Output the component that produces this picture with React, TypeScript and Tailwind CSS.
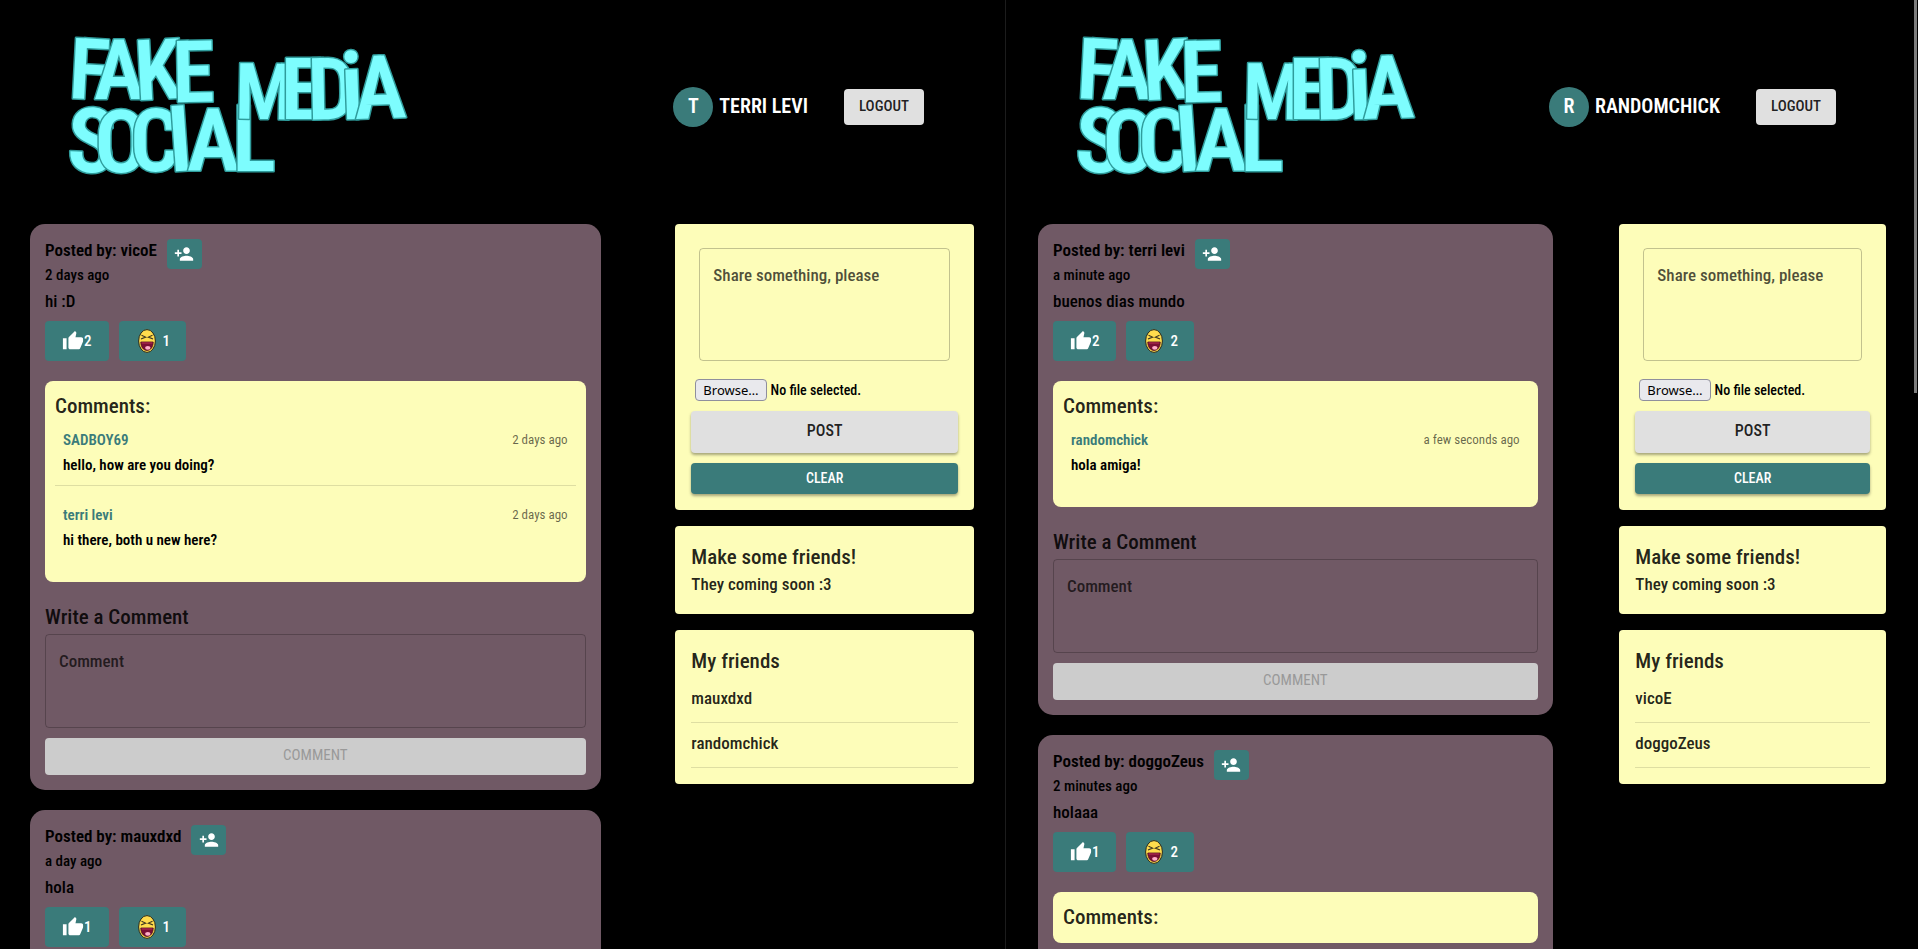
import { useId } from "react";
import { MdPersonAdd, MdThumbUp } from "react-icons/md";

type Comment = { author: string; when: string; text: string };
type Post = {
  author: string;
  when: string;
  text: string;
  likes: number;
  laughs: number;
  comments: Comment[];
};
type Session = { name: string; posts: Post[]; friends: string[] };

const sessions: Session[] = [
  {
    name: "TERRI LEVI",
    friends: ["mauxdxd", "randomchick"],
    posts: [
      {
        author: "vicoE",
        when: "2 days ago",
        text: "hi :D",
        likes: 2,
        laughs: 1,
        comments: [
          { author: "SADBOY69", when: "2 days ago", text: "hello, how are you doing?" },
          { author: "terri levi", when: "2 days ago", text: "hi there, both u new here?" },
        ],
      },
      { author: "mauxdxd", when: "a day ago", text: "hola", likes: 1, laughs: 1, comments: [] },
    ],
  },
  {
    name: "RANDOMCHICK",
    friends: ["vicoE", "doggoZeus"],
    posts: [
      {
        author: "terri levi",
        when: "a minute ago",
        text: "buenos dias mundo",
        likes: 2,
        laughs: 2,
        comments: [{ author: "randomchick", when: "a few seconds ago", text: "hola amiga!" }],
      },
      { author: "doggoZeus", when: "2 minutes ago", text: "holaaa", likes: 1, laughs: 2, comments: [] },
    ],
  },
];

/* letter, centre x, baseline y, tilt, size */
const logoLetters: [string, number, number, number, number][] = [
  ["F", 38, 79, 3, 85],
  ["A", 69, 79, 0, 84],
  ["K", 109, 79, -3, 84],
  ["E", 144, 82, -1, 86],
  ["S", 40, 152, 3, 90],
  ["O", 71, 152, 0, 88],
  ["C", 105, 151, 0, 88],
  ["I", 132, 151, -4, 92],
  ["A", 163, 151, 0, 88],
  ["L", 204, 151, 0, 92],
  ["M", 214, 99, 1, 78],
  ["E", 252, 99, 0, 86],
  ["D", 282, 99, -1, 86],
  ["i", 303, 99, -2, 94],
  ["A", 331, 98, -2, 88],
];

function Logo() {
  return (
    <svg
      viewBox="0 0 370 170"
      role="img"
      aria-label="Fake Social Media"
      className="h-[170px] w-[370px] shrink-0 overflow-visible fill-[#7dfdfe] stroke-[#2f9c9c] stroke-3 leading-none font-semibold [paint-order:stroke]"
      strokeLinejoin="round"
    >
      {logoLetters.map(([letter, x, y, tilt, size], i) => (
        <text key={i} x={x} y={y} fontSize={size} textAnchor="middle" transform={`rotate(${tilt} ${x} ${y})`}>
          {letter}
        </text>
      ))}
    </svg>
  );
}

function LaughIcon() {
  return (
    <svg viewBox="0 0 24 24" className="size-6" aria-hidden="true">
      <ellipse cx="12" cy="12" rx="8.4" ry="11.4" fill="#ffdc4d" stroke="#2b2b1c" strokeWidth="1" />
      <path d="M6.5 6.2 10.6 8.1 6 9.9M17.5 6.2 13.4 8.1 18 9.9" fill="none" stroke="#3a3320" strokeWidth="1.1" />
      <path d="M5.8 13h12.4c0 4.6-2.4 8.4-6.2 8.4S5.8 17.6 5.8 13Z" fill="#7a0f35" stroke="#4a0a20" strokeWidth="0.8" />
      <path d="M6.6 13.4h10.8v1.2H6.6Z" fill="#b02a50" />
      <ellipse cx="12.8" cy="18.8" rx="2.7" ry="1.9" fill="#ffaec9" />
    </svg>
  );
}

function Header({ name }: { name: string }) {
  return (
    <header className="flex h-[224px] items-start justify-between pt-5 pr-[81px] pl-[50px]">
      <Logo />
      <div className="flex items-center pt-[67px]">
        <span className="flex size-10 items-center justify-center rounded-full bg-[#3a7b7a] pb-0.5 text-[20px] leading-none font-semibold">
          {name[0]}
        </span>
        <span className="ml-1.5 pb-0.5 text-[20px] leading-8 font-semibold whitespace-nowrap">{name}</span>
        <button className="ml-9 h-9 w-20 rounded bg-[#e0e0e0] pb-0.5 text-[15px] font-medium text-black/87">
          LOGOUT
        </button>
      </div>
    </header>
  );
}

function CommentBox({ comments }: { comments: Comment[] }) {
  return (
    <section className="mt-5 rounded-lg bg-[#fdfdb9] p-2.5">
      <h3 className="pb-px text-[21px] leading-[30px] font-medium text-black/87">Comments:</h3>
      {comments.map((c, i) => (
        <article key={c.author} className="h-[75px]">
          <div
            className={
              i < comments.length - 1 ? "h-16 border-b border-black/12 px-2 pt-1.5" : "h-16 px-2 pt-1.5"
            }
          >
            <div className="flex items-center justify-between leading-6">
              <a href="#profile" className="text-[15px] leading-6 font-semibold text-[#3a7b7a]">
                {c.author}
              </a>
              <span className="text-[13px] leading-6 text-black/60">{c.when}</span>
            </div>
            <p className="text-[15px] leading-[26px] font-semibold">{c.text}</p>
          </div>
        </article>
      ))}
    </section>
  );
}

function PostCard({ post }: { post: Post }) {
  const id = useId();
  return (
    <article className="rounded-[15px] bg-[#705965] p-[15px] text-black">
      <div className="flex gap-2.5">
        <div>
          <h2 className="text-[17px] leading-[22px] font-semibold">Posted by: {post.author}</h2>
          <p className="h-[26px] text-[15px] leading-7 font-medium whitespace-nowrap">{post.when}</p>
        </div>
        <button
          aria-label="Add friend"
          className="flex h-[30px] w-[35px] items-center justify-center rounded bg-[#3a7b7a] text-white"
        >
          <MdPersonAdd size={20} />
        </button>
      </div>
      <p className="pt-1 pb-2.5 text-[17px] leading-5 font-medium">{post.text}</p>
      <div className="flex gap-2.5 text-[15px] font-medium text-white">
        <button aria-label="Like" className="flex h-10 items-center rounded bg-[#3a7b7a] px-[17px]">
          <MdThumbUp size={22} />
          {post.likes}
        </button>
        <button aria-label="Laugh" className="flex h-10 items-center gap-1 rounded bg-[#3a7b7a] px-4">
          <LaughIcon />
          {post.laughs}
        </button>
      </div>
      <CommentBox comments={post.comments} />
      <form className="flex flex-col" onSubmit={(e) => e.preventDefault()}>
        <label htmlFor={id} className="pt-5 pb-0.5 text-[21px] leading-[30px] font-medium text-black/87">
          Write a Comment
        </label>
        <textarea
          id={id}
          placeholder="Comment"
          className="h-[94px] resize-none rounded border border-black/23 px-[13px] py-3.5 text-[17px] leading-6 font-medium placeholder:text-black/70"
        />
        <button disabled className="mt-2.5 h-[37px] rounded bg-[#cccccc] pb-0.5 text-[15px] text-[#999999]">
          COMMENT
        </button>
      </form>
    </article>
  );
}

function ShareForm() {
  const id = useId();
  return (
    <form
      className="flex flex-col rounded bg-[#fdfdb9] p-4 text-black/87"
      onSubmit={(e) => e.preventDefault()}
    >
      <textarea
        aria-label="Share something, please"
        placeholder="Share something, please"
        className="mx-2 mt-2 h-[113px] resize-none rounded border border-black/23 px-[13px] py-3.5 text-[17px] leading-6 font-medium placeholder:text-black/70"
      />
      <div className="flex items-center gap-1 px-1 pt-[18px]">
        <label
          htmlFor={id}
          className="h-[22px] rounded border border-[#8f8f9d] bg-[#e9e9ed] px-[7px] font-['Noto_Sans',sans-serif] text-[13px] leading-5 whitespace-nowrap text-black"
        >
          Browse…
        </label>
        <input id={id} type="file" className="sr-only" />
        <span className="text-sm leading-[22px] font-medium text-black">No file selected.</span>
      </div>
      <button className="mt-2.5 h-[42px] rounded bg-[#e0e0e0] pb-0.5 text-base font-medium shadow-[0_2px_3px_rgba(0,0,0,0.35)]">
        POST
      </button>
      <button className="mt-2.5 h-[31px] rounded bg-[#3a7b7a] pb-0.5 text-sm font-medium text-white shadow-[0_2px_3px_rgba(0,0,0,0.35)]">
        CLEAR
      </button>
    </form>
  );
}

function Panel({ session }: { session: Session }) {
  return (
    <>
      <Header name={session.name} />
      <main className="flex items-start justify-between pr-[31px] pb-8 pl-[30px]">
        <div className="flex w-[calc(100%*7/12+20px)] flex-col gap-5">
          {session.posts.map((p) => (
            <PostCard key={p.author} post={p} />
          ))}
        </div>
        <aside className="flex w-[calc(100%/3-16px)] flex-col gap-4">
          <ShareForm />
          <section className="rounded bg-[#fdfdb9] p-4 text-black/87">
            <h2 className="text-[21px] leading-[30px] font-medium">Make some friends!</h2>
            <p className="pb-0.5 text-[17px] leading-6 font-medium">They coming soon :3</p>
          </section>
          <section className="rounded bg-[#fdfdb9] p-4 text-black/87">
            <h2 className="pb-0.5 text-[21px] leading-[30px] font-medium">My friends</h2>
            <ul>
              {session.friends.map((f) => (
                <li key={f} className="h-[45px] border-b border-black/12 text-[17px] leading-10 font-medium">
                  {f}
                </li>
              ))}
            </ul>
          </section>
        </aside>
      </main>
    </>
  );
}

export default function App() {
  return (
    <div className="relative flex h-screen overflow-hidden bg-black font-['Roboto_Condensed','Liberation_Sans_Narrow','Liberation_Sans',sans-serif] text-white">
      <div className="w-[52.45%] overflow-y-auto border-r border-[#1c1c1c] [scrollbar-width:none]">
        <Panel session={sessions[0]} />
      </div>
      <div className="flex-1 overflow-y-auto pr-px pl-0.5 [scrollbar-width:none]">
        <Panel session={sessions[1]} />
      </div>
      <div aria-hidden="true" className="absolute top-0 right-px h-[393px] w-[3px] bg-[#7d7d7d]" />
    </div>
  );
}
